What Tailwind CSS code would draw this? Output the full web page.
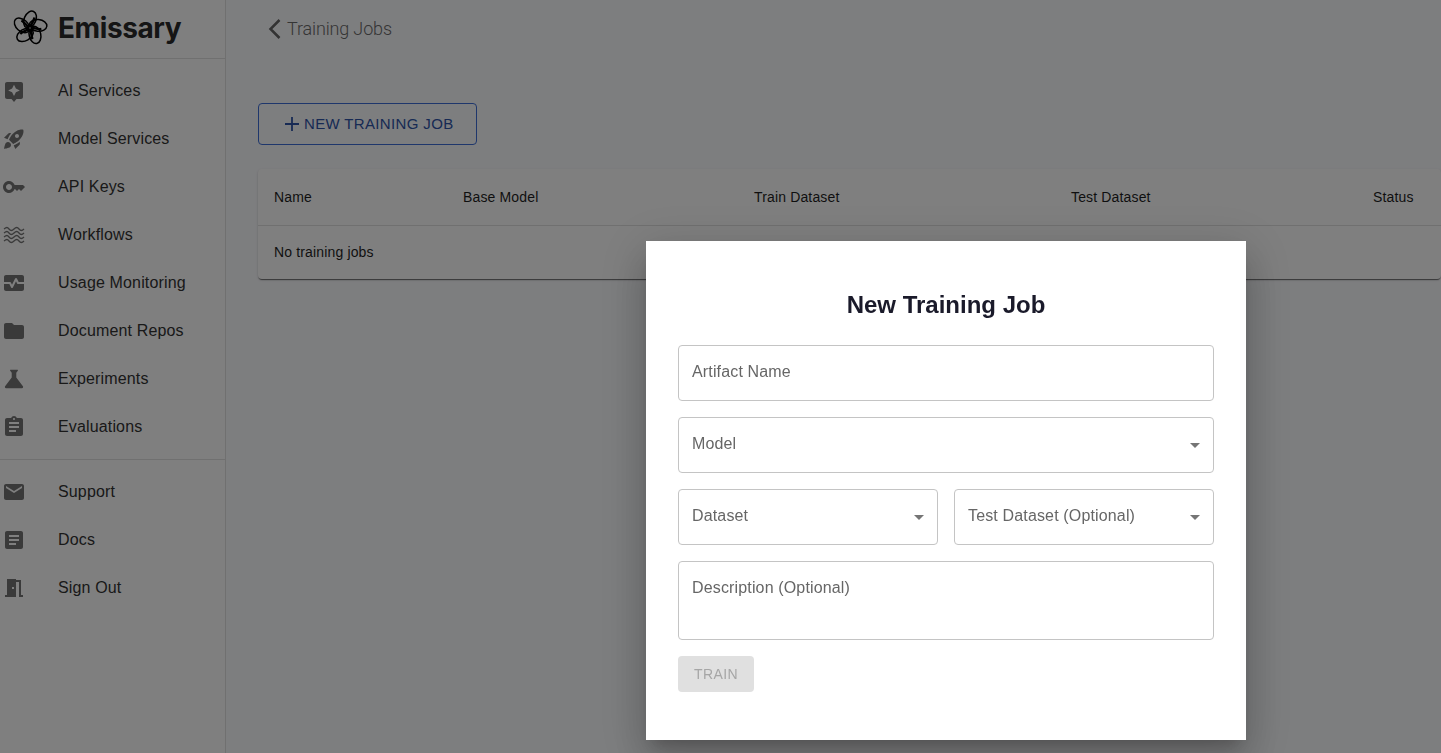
<!DOCTYPE html>
<html lang="en">
<head>
    <meta charset="UTF-8">
    <meta name="viewport" content="width=device-width, initial-scale=1.0">
    <script src="https://cdn.jsdelivr.net/npm/@tailwindcss/browser@4"></script>
    <title>Emissary</title>
</head>
<body class="h-[753px] overflow-hidden bg-[#fbfcff] font-['Liberation_Sans',sans-serif]">
    <div class="flex h-[753px]">
        <!-- sidebar -->
        <aside class="w-[226px] shrink-0 border-r border-[#e0e0e0] bg-white">
            <div class="flex h-[59px] items-center border-b border-[#e0e0e0] pb-[2px]">
                <svg class="ml-[12px] h-[36px] w-[36px]" viewBox="0 0 36 36" fill="none" stroke="#000" stroke-width="1.500">
                    <g id="petal">
                        <ellipse cx="18" cy="9.500" rx="5.800" ry="8.800" transform="rotate(24 18 9.500)"/>
                        <path d="M18 17c1.500-3.500 4-6 4.500-9.500" stroke-width="2.400"/>
                    </g>
                    <use href="#petal" transform="rotate(72 18 18)"/>
                    <use href="#petal" transform="rotate(144 18 18)"/>
                    <use href="#petal" transform="rotate(216 18 18)"/>
                    <use href="#petal" transform="rotate(288 18 18)"/>
                    <circle cx="18" cy="18" r="2.800" fill="#000"/>
                    <circle cx="18" cy="18" r="1" fill="#777" stroke="none"/>
                </svg>
                <span class="ml-[10px] font-['Inter',sans-serif] text-[28px] font-bold tracking-[-0.4px] text-[#2a2a2a]">Emissary</span>
            </div>
            <nav class="border-b border-[#e0e0e0] py-[8px]">
                <a class="flex h-[48px] items-center pl-[2px] text-[16px] tracking-[0.15px] text-[#333]">
                    <svg class="mr-[32px] h-[24px] w-[24px] fill-[#757575]" viewBox="0 0 24 24"><path fill-rule="evenodd" d="M5 3h14c1.100 0 2 .9 2 2v13c0 1.100-.9 2-2 2h-4.500L12 23l-2.500-3H5c-1.100 0-2-.9-2-2V5c0-1.100.9-2 2-2m7 2.800-1.900 3.700-3.900 1.900 3.900 1.900 1.900 3.800 1.900-3.800 3.900-1.900-3.900-1.900z"/></svg>AI Services</a>
                <a class="flex h-[48px] items-center pl-[2px] text-[16px] tracking-[0.15px] text-[#333]">
                    <svg class="mr-[32px] h-[24px] w-[24px] fill-[#757575]" viewBox="0 0 24 24"><path d="M9.190 6.350c-2.040 2.290-3.440 5.580-3.570 5.890L2 10.690l4.050-4.050c.47-.47 1.150-.68 1.810-.55zM11.170 17s3.740-1.550 5.890-3.700c5.400-5.400 4.500-9.620 4.210-10.570-.95-.3-5.170-1.190-10.570 4.210C8.550 9.090 7 12.830 7 12.830zm6.480-2.190c-2.290 2.040-5.580 3.440-5.890 3.570L13.310 22l4.050-4.050c.47-.47.68-1.150.55-1.810zM9 18c0 .83-.34 1.580-.88 2.120C6.940 21.300 2 22 2 22s.7-4.940 1.880-6.120C4.420 15.340 5.170 15 6 15c1.660 0 3 1.340 3 3m4-9c0-1.100.9-2 2-2s2 .9 2 2-.9 2-2 2-2-.9-2-2"/></svg>Model Services</a>
                <a class="flex h-[48px] items-center pl-[2px] text-[16px] tracking-[0.15px] text-[#333]">
                    <svg class="mr-[32px] h-[24px] w-[24px] fill-[#757575]" viewBox="0 0 24 24"><path d="M21 10h-8.350C11.830 7.670 9.610 6 7 6c-3.310 0-6 2.690-6 6s2.690 6 6 6c2.610 0 4.830-1.670 5.650-4H13l2 2 2-2 2 2 4-4.040zM7 15c-1.650 0-3-1.350-3-3s1.350-3 3-3 3 1.350 3 3-1.350 3-3 3"/></svg>API Keys</a>
                <a class="flex h-[48px] items-center pl-[2px] text-[16px] tracking-[0.15px] text-[#333]">
                    <svg class="mr-[32px] h-[24px] w-[24px]" viewBox="0 0 24 24" fill="none" stroke="#757575" stroke-width="1.300"><path d="M2 6c2.500-2 3.500-2 5 0s3 2 5 0 3.500-2 5 0 3 2 5 0"/><path d="M2 10c2.500-2 3.500-2 5 0s3 2 5 0 3.500-2 5 0 3 2 5 0"/><path d="M2 14c2.500-2 3.500-2 5 0s3 2 5 0 3.500-2 5 0 3 2 5 0"/><path d="M2 18c2.500-2 3.500-2 5 0s3 2 5 0 3.500-2 5 0 3 2 5 0"/></svg>Workflows</a>
                <a class="flex h-[48px] items-center pl-[2px] text-[16px] tracking-[0.15px] text-[#333]">
                    <svg class="mr-[32px] h-[24px] w-[24px] fill-[#757575]" viewBox="0 0 24 24"><path d="M15.110 12.450 14 10.240l-3.110 6.210c-.16.34-.51.55-.89.55s-.73-.21-.89-.55L7.380 13H2v5c0 1.100.9 2 2 2h16c1.100 0 2-.9 2-2v-5h-6c-.38 0-.73-.21-.89-.55"/><path d="M20 4H4c-1.100 0-2 .9-2 2v5h6c.38 0 .73.21.89.55L10 13.760l3.110-6.210c.34-.68 1.450-.68 1.790 0L16.620 11H22V6c0-1.100-.9-2-2-2"/></svg>Usage Monitoring</a>
                <a class="flex h-[48px] items-center pl-[2px] text-[16px] tracking-[0.15px] text-[#333]">
                    <svg class="mr-[32px] h-[24px] w-[24px] fill-[#757575]" viewBox="0 0 24 24"><path d="M10 4H4c-1.100 0-1.990.9-1.990 2L2 18c0 1.100.9 2 2 2h16c1.100 0 2-.9 2-2V8c0-1.100-.9-2-2-2h-8z"/></svg>Document Repos</a>
                <a class="flex h-[48px] items-center pl-[2px] text-[16px] tracking-[0.15px] text-[#333]">
                    <svg class="mr-[32px] h-[24px] w-[24px] fill-[#757575]" viewBox="1.500 1.500 21 21"><path d="M19.800 18.400 14 10.670V6.500l1.350-1.690c.26-.33.03-.81-.39-.81H9.040c-.42 0-.65.48-.39.81L10 6.500v4.170L4.200 18.400c-.49.66-.02 1.600.8 1.600h14c.82 0 1.290-.94.8-1.600"/></svg>Experiments</a>
                <a class="flex h-[48px] items-center pl-[2px] text-[16px] tracking-[0.15px] text-[#333]">
                    <svg class="mr-[32px] h-[24px] w-[24px] fill-[#757575]" viewBox="0 0 24 24"><path d="M19 3h-4.180C14.400 1.840 13.300 1 12 1c-1.300 0-2.400.84-2.820 2H5c-1.100 0-2 .9-2 2v14c0 1.100.9 2 2 2h14c1.100 0 2-.9 2-2V5c0-1.100-.9-2-2-2m-7 0c.55 0 1 .45 1 1s-.45 1-1 1-1-.45-1-1 .45-1 1-1m2 14H7v-2h7zm3-4H7v-2h10zm0-4H7V7h10z"/></svg>Evaluations</a>
            </nav>
            <nav class="py-[8px]">
                <a class="flex h-[48px] items-center pl-[2px] text-[16px] tracking-[0.15px] text-[#333]">
                    <svg class="mr-[32px] h-[24px] w-[24px] fill-[#757575]" viewBox="0 0 24 24"><path d="M20 4H4c-1.100 0-1.990.9-1.990 2L2 18c0 1.100.9 2 2 2h16c1.100 0 2-.9 2-2V6c0-1.100-.9-2-2-2m0 4-8 5-8-5V6l8 5 8-5z"/></svg>Support</a>
                <a class="flex h-[48px] items-center pl-[2px] text-[16px] tracking-[0.15px] text-[#333]">
                    <svg class="mr-[32px] h-[24px] w-[24px] fill-[#757575]" viewBox="0 0 24 24"><path d="M19 3H5c-1.100 0-2 .9-2 2v14c0 1.100.9 2 2 2h14c1.100 0 2-.9 2-2V5c0-1.100-.9-2-2-2m-5 14H7v-2h7zm3-4H7v-2h10zm0-4H7V7h10z"/></svg>Docs</a>
                <a class="flex h-[48px] items-center pl-[2px] text-[16px] tracking-[0.15px] text-[#333]">
                    <svg class="mr-[32px] h-[24px] w-[24px] fill-[#757575]" viewBox="0 0 24 24"><path d="M14 6v15H3v-2h2V3h9v1h5v15h2v2h-4V6zm-4 5v2h2v-2z"/></svg>Sign Out</a>
            </nav>
        </aside>

        <!-- main -->
        <main class="min-w-0 flex-1 pl-[32px]">
            <div class="flex h-[57px] items-center pl-[6px]">
                <svg class="h-[24px] w-[24px]" viewBox="0 0 24 24" fill="none" stroke="#666" stroke-width="2.500"><path d="M15.500 3 6.500 12l9 9"/></svg>
                <span class="-ml-[1px] font-['Roboto',sans-serif] text-[18px] font-light tracking-[-0.15px] text-[#6b6b6b]">Training Jobs</span>
            </div>
            <button class="mt-[46px] flex h-[42px] w-[219px] items-center rounded-[4px] border border-[#3f6fd8] pl-[25px] text-[15px] tracking-[0.35px] text-[#2f55a8]">
                <svg class="mr-[4px] h-[16px] w-[16px]" viewBox="0 0 16 16" fill="none" stroke="#2f55a8" stroke-width="1.800"><path d="M8 1v14M1 8h14"/></svg>NEW TRAINING JOB</button>
            <div class="mt-[24px] rounded-[4px] bg-white text-[14px] tracking-[0.15px] text-[#1f1f1f] shadow-[0_2px_1px_-1px_rgba(0,0,0,0.4),0_1px_1px_0_rgba(0,0,0,0.2),0_1px_3px_0_rgba(0,0,0,0.12)]">
                <div class="flex h-[57px] items-center border-b border-[#e0e0e0]">
                    <span class="w-[205px] pl-[16px]">Name</span>
                    <span class="w-[291px]">Base Model</span>
                    <span class="w-[317px]">Train Dataset</span>
                    <span class="w-[302px]">Test Dataset</span>
                    <span>Status</span>
                </div>
                <div class="flex h-[53px] items-center pl-[16px]">No training jobs</div>
            </div>
        </main>
    </div>

    <!-- modal -->
    <div class="fixed inset-0 bg-black/50">
        <div class="absolute left-[646px] top-[241px] flex h-[499px] w-[600px] flex-col bg-white px-[32px] pt-[32px] shadow-[0_11px_15px_-7px_rgba(0,0,0,0.2),0_24px_38px_3px_rgba(0,0,0,0.14),0_9px_46px_8px_rgba(0,0,0,0.12)]">
            <h2 class="flex h-[56px] items-start justify-center pt-[16px] text-[24px] leading-[32px] font-bold text-[#1a1a2a]">New Training Job</h2>
            <div class="mt-[16px] h-[56px] rounded-[4px] border border-[#c4c4c4] px-[13px] pt-[16px] text-[16px] leading-[20px] tracking-[0.15px] text-[#666]">Artifact Name</div>
            <div class="relative mt-[16px] h-[56px] rounded-[4px] border border-[#c4c4c4] px-[13px] pt-[16px] text-[16px] leading-[20px] tracking-[0.15px] text-[#666]">Model
                <svg class="absolute right-[6px] top-[15px] h-[24px] w-[24px] fill-[#757575]" viewBox="0 0 24 24"><path d="m7 10 5 5 5-5z"/></svg>
            </div>
            <div class="mt-[16px] flex gap-[16px]">
                <div class="relative h-[56px] flex-1 rounded-[4px] border border-[#c4c4c4] px-[13px] pt-[16px] text-[16px] leading-[20px] tracking-[0.15px] text-[#666]">Dataset
                    <svg class="absolute right-[6px] top-[15px] h-[24px] w-[24px] fill-[#757575]" viewBox="0 0 24 24"><path d="m7 10 5 5 5-5z"/></svg>
                </div>
                <div class="relative h-[56px] flex-1 rounded-[4px] border border-[#c4c4c4] px-[13px] pt-[16px] text-[16px] leading-[20px] tracking-[0.15px] text-[#666]">Test Dataset (Optional)
                    <svg class="absolute right-[6px] top-[15px] h-[24px] w-[24px] fill-[#757575]" viewBox="0 0 24 24"><path d="m7 10 5 5 5-5z"/></svg>
                </div>
            </div>
            <div class="mt-[16px] h-[79px] rounded-[4px] border border-[#c4c4c4] px-[13px] pt-[16px] text-[16px] leading-[20px] tracking-[0.15px] text-[#666]">Description (Optional)</div>
            <button class="mt-[16px] h-[36px] w-[76px] rounded-[4px] bg-[#e0e0e0] text-[14px] tracking-[0.4px] text-[#a6a6a6]">TRAIN</button>
        </div>
    </div>
</body>
</html>
